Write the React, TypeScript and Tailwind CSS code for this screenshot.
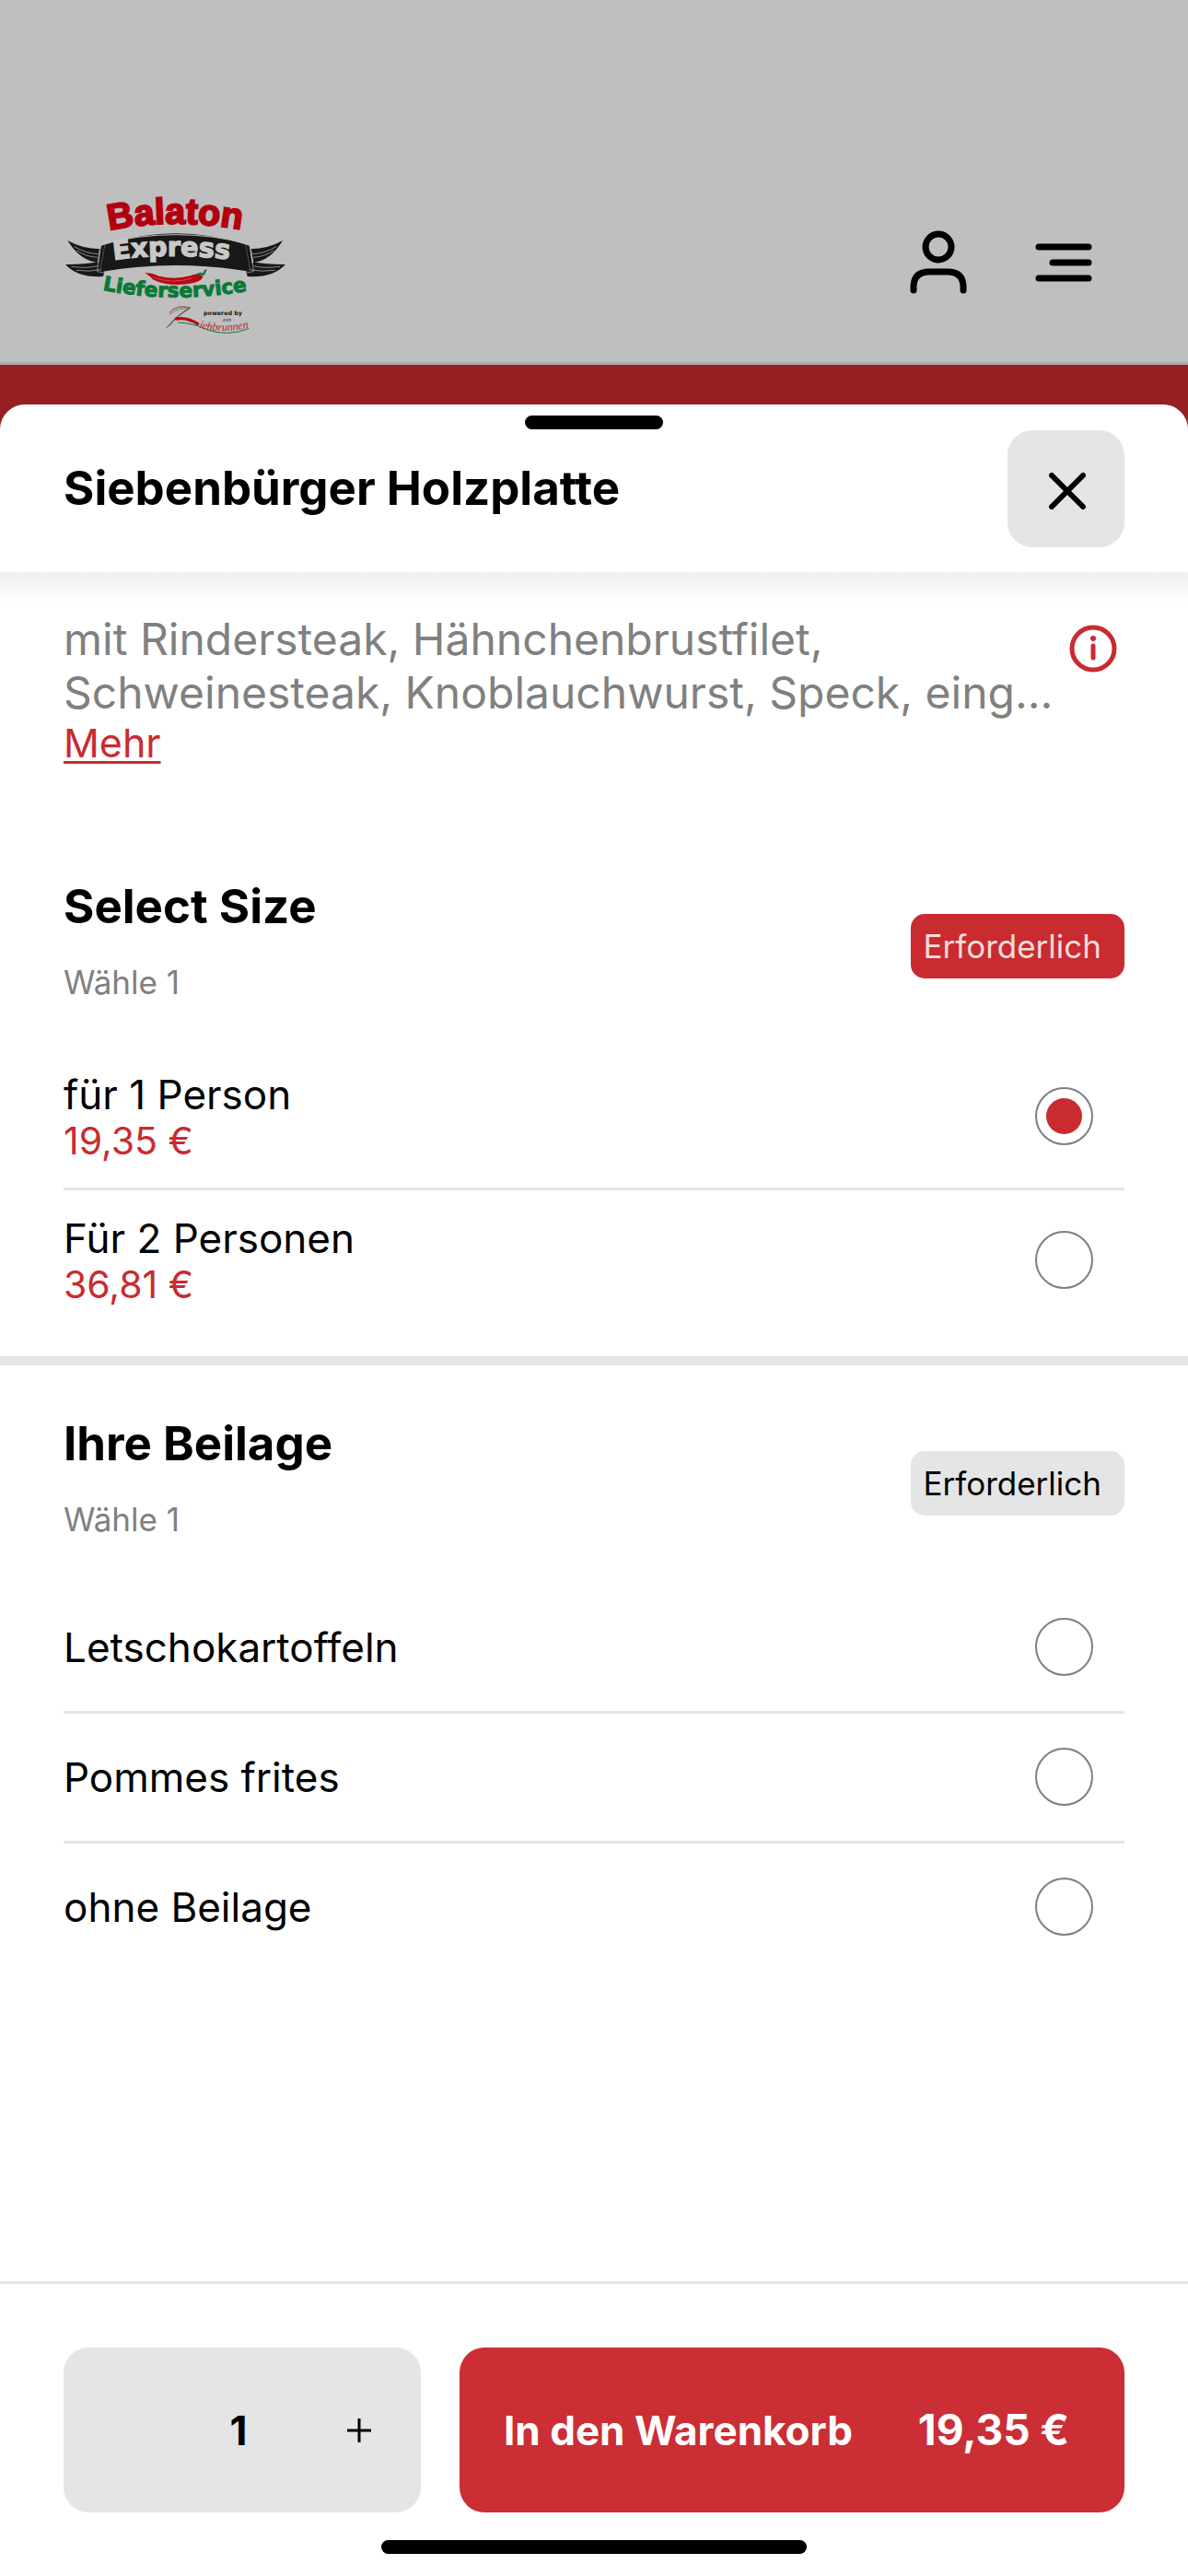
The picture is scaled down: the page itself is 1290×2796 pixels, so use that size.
import { useState } from "react";

type Option = { id: string; label: string; price?: string };

const sizes: Option[] = [
  { id: "one", label: "für 1 Person", price: "19,35 €" },
  { id: "two", label: "Für 2 Personen", price: "36,81 €" },
];

const sides: Option[] = [
  { id: "letscho", label: "Letschokartoffeln" },
  { id: "pommes", label: "Pommes frites" },
  { id: "none", label: "ohne Beilage" },
];

function Logo() {
  return (
    <svg viewBox="0 0 840 630" className="h-[210px] w-[280px]" role="img" aria-label="Balaton Express Lieferservice">
      <defs>
        <path id="arcTop" d="M206 240 Q425 194 670 244" />
        <path id="arcMid" d="M220 336 Q425 308 660 342" />
        <path id="arcLow" d="M184 434 Q425 482 672 434" />
        <path id="arcBrunnen" d="M498 556 Q570 580 680 552" />
      </defs>
      <text fill="#b3000f" stroke="#b3000f" strokeWidth="6" fontSize="118" fontWeight="700" fontFamily="'Liberation Sans', sans-serif">
        <textPath href="#arcTop">Balaton</textPath>
      </text>
      <g fill="#181818">
        <path d="M70 273 Q118 300 176 301 L168 345 Q110 338 70 273Z" />
        <path d="M63 351 Q120 352 168 343 L190 376 L186 390 Q105 396 63 351Z" />
        <path d="M771 273 Q724 300 667 301 L676 345 Q732 338 771 273Z" />
        <path d="M780 351 Q724 352 676 343 L652 376 L656 390 Q738 396 780 351Z" />
        <path d="M180 290 Q425 210 662 290 L676 377 Q425 331 166 377Z" />
      </g>
      <g fill="none" stroke="#bfbfbf" strokeWidth="3">
        <path d="M184 284 Q425 224 658 284" />
        <path d="M192 286 L176 368 M650 286 L665 368" strokeWidth="1" />
        <path d="M92 293 Q130 316 170 317 M100 306 Q130 326 168 328 M750 293 Q712 316 672 317 M742 306 Q712 326 674 328" strokeWidth="2" />
        <path d="M82 358 Q130 365 168 356 M98 370 Q140 376 180 368 M762 358 Q712 365 676 356 M746 370 Q702 376 662 368" strokeWidth="2" />
        <path d="M174 303 L167 374 L189 378 M668 303 L676 374 L653 378" strokeWidth="2" />
      </g>
      <g fontFamily="'DejaVu Sans', sans-serif" fontWeight="700">
        <text fill="#c8c8c8" stroke="#c8c8c8" strokeWidth="4" fontSize="86">
          <textPath href="#arcMid">Express</textPath>
        </text>
        <text fill="#087a38" stroke="#087a38" strokeWidth="3" fontSize="65">
          <textPath href="#arcLow">Lieferservice</textPath>
        </text>
        <text x="513" y="517" fill="#181818" fontSize="19">powered by</text>
      </g>
      <path d="M322 379 Q342 377 368 389 Q420 402 470 388 Q494 376 511 390 Q510 403 482 411 Q405 426 350 401 Q337 388 322 379Z" fill="#b80714" />
      <path d="M350 393 Q410 416 475 396" fill="none" stroke="#d6434b" strokeWidth="3" />
      <path d="M487 385 Q500 373 510 380 Q518 365 524 367 Q519 382 513 388 Q500 383 487 385Z" fill="#087a38" />
      <g fill="none" strokeLinecap="round">
        <path d="M402 508 Q426 480 470 492 Q430 512 392 558" stroke="#b3252d" strokeWidth="3" />
        <path d="M404 514 Q432 488 466 496 Q424 520 402 552" stroke="#087a38" strokeWidth="2" />
        <path d="M424 528 Q458 522 494 544" stroke="#b80714" strokeWidth="10" />
        <path d="M430 540 Q480 542 520 562 Q590 588 660 560" stroke="#087a38" strokeWidth="3" />
      </g>
      <g fontFamily="'Liberation Serif', serif" fontStyle="italic">
        <text fill="#b3252d" fontSize="36">
          <textPath href="#arcBrunnen">iehbrunnen</textPath>
        </text>
        <text x="576" y="536" fill="#333333" fontSize="17">zum</text>
      </g>
    </svg>
  );
}

function Choice({ option, name, checked, onSelect }: { option: Option; name: string; checked: boolean; onSelect: () => void }) {
  return (
    <label className="flex min-h-[63px] cursor-pointer items-center justify-between pr-[34px]">
      <span className="flex flex-col">
        <span className="text-[44px] leading-[54px]">{option.label}</span>
        {option.price && <span className="text-[41px] leading-[46px] text-[#c92b30]">{option.price}</span>}
      </span>
      <span className="grid size-[63px] shrink-0 place-items-center">
        <input
          type="radio"
          name={name}
          checked={checked}
          onChange={onSelect}
          className="peer col-start-1 row-start-1 size-[63px] appearance-none rounded-full border-2 border-[#7f7f7f]"
        />
        <span className="pointer-events-none col-start-1 row-start-1 hidden size-[39px] rounded-full bg-[#c92b30] peer-checked:block" />
      </span>
    </label>
  );
}

function GroupHead({ title, active }: { title: string; active?: boolean }) {
  return (
    <div className="flex items-center justify-between">
      <div className="pb-[12px]">
        <h2 className="text-[51px] leading-[60px] font-bold">{title}</h2>
        <p className="mt-[30px] text-[35px] leading-[44px] text-[#808080]">Wähle 1</p>
      </div>
      <span
        className={
          active
            ? "rounded-[15px] bg-[#c92b30] py-[13px] pr-[25px] pl-[14px] text-[35px] leading-[44px] text-[#f4dcdd]"
            : "rounded-[15px] bg-[#e5e5e5] py-[13px] pr-[25px] pl-[14px] text-[35px] leading-[44px] text-black"
        }
      >
        Erforderlich
      </span>
    </div>
  );
}

export default function App() {
  const [size, setSize] = useState("one");
  const [side, setSide] = useState("");
  const [count, setCount] = useState(1);

  return (
    <div className="flex min-h-screen flex-col bg-[#951f23] font-['Inter','Liberation_Sans',sans-serif] text-black">
      <header className="flex items-start justify-between border-b-[3px] border-[#a9a9a9] bg-[#bfbfbf] pt-[170px] pr-[104px] pb-[13px] pl-[50px]">
        <Logo />
        <div className="mt-[79px] flex gap-[74px]">
          <button aria-label="Konto">
            <svg viewBox="0 0 62 72" className="h-[72px] w-[62px]" fill="none" stroke="black" strokeWidth="7" strokeLinecap="round">
              <circle cx="31" cy="19" r="14" />
              <path d="M4 66 V61 Q5 46 21 46 H41 Q57 46 58 61 V66" />
            </svg>
          </button>
          <button aria-label="Menü">
            <svg viewBox="0 0 62 72" className="h-[72px] w-[62px]" fill="none" stroke="black" strokeWidth="7" strokeLinecap="round">
              <path d="M4 19 H58 M19 36 H58 M4 53 H58" />
            </svg>
          </button>
        </div>
      </header>

      <main className="mt-[43px] flex flex-1 flex-col rounded-t-[27px] bg-white">
        <div className="px-[69px] pt-[12px] pb-[27px]">
          <div className="mx-auto h-[15px] w-[150px] rounded-full bg-black" />
          <div className="mt-px flex items-center justify-between">
            <h1 className="pb-[2px] text-[51px] leading-[60px] font-bold">Siebenbürger Holzplatte</h1>
            <button aria-label="Schließen" className="grid size-[127px] place-items-center rounded-[27px] bg-[#e5e5e5] pt-[4px] pl-[3px]">
              <svg viewBox="0 0 40 40" className="size-[40px]" stroke="black" strokeWidth="6" strokeLinecap="round">
                <path d="M3 3 L37 37 M37 3 L3 37" />
              </svg>
            </button>
          </div>
        </div>
        <div className="h-[36px] bg-linear-to-b from-[#f0f0f0] to-white" />

        <section className="flex items-start justify-between px-[69px] pt-[8px]">
          <div className="min-w-0">
            <p className="text-[48px] leading-[58px] whitespace-nowrap text-[#808080]">
              mit Rindersteak, Hähnchenbrustfilet,
              <br />
              Schweinesteak, Knoblauchwurst, Speck, eing...
            </p>
            <a href="#mehr" className="block w-fit text-[43px] leading-[50px] text-[#c92b30] underline decoration-[3px] underline-offset-[4px]">
              Mehr
            </a>
          </div>
          <button aria-label="Information" className="mt-[13px] mr-[8px] shrink-0">
            <svg viewBox="0 0 52 52" className="size-[52px]" fill="none" stroke="#c92b30" strokeWidth="5" strokeLinecap="round">
              <circle cx="26" cy="26" r="23" />
              <path d="M26 23 V36" />
              <circle cx="26" cy="15" r="3" fill="#c92b30" stroke="none" />
            </svg>
          </button>
        </section>

        <section className="px-[69px] pt-[123px] pb-[55px]">
          <GroupHead title="Select Size" active />
          <div className="mt-[61px] flex flex-col">
            {sizes.map((o, i) => (
              <div key={o.id} className={i > 0 ? "mt-[28px] border-t-[3px] border-[#e5e5e5] pt-[25px]" : ""}>
                <Choice option={o} name="size" checked={size === o.id} onSelect={() => setSize(o.id)} />
              </div>
            ))}
          </div>
        </section>

        <section className="border-t-[10px] border-[#e5e5e5] px-[69px] pt-[55px]">
          <GroupHead title="Ihre Beilage" />
          <div className="mt-[73px] flex flex-col">
            {sides.map((o, i) => (
              <div key={o.id} className={i > 0 ? "mt-[38px] border-t-[3px] border-[#e5e5e5] pt-[37px]" : ""}>
                <Choice option={o} name="side" checked={side === o.id} onSelect={() => setSide(o.id)} />
              </div>
            ))}
          </div>
        </section>

        <footer className="mt-auto border-t-[3px] border-[#e5e5e5] px-[69px] pt-[69px] pb-[24px]">
          <div className="flex gap-[42px]">
            <div className="grid h-[179px] w-[388px] grid-cols-3 items-center rounded-[27px] bg-[#e5e5e5] text-[44px]">
              <button aria-label="Weniger" className="h-full" disabled={count === 1} onClick={() => setCount(count - 1)} />
              <span className="pr-[8px] text-center font-bold">{count}</span>
              <button aria-label="Mehr" className="grid h-full place-items-center pr-[4px]" onClick={() => setCount(count + 1)}>
                <svg viewBox="0 0 26 26" className="size-[26px]" stroke="black" strokeWidth="3">
                  <path d="M0 13 H26 M13 0 V26" />
                </svg>
              </button>
            </div>
            <button className="flex flex-1 items-center justify-between rounded-[27px] bg-[#cb2e35] pr-[60px] pl-[48px] font-bold text-white">
              <span className="text-[44px]">In den Warenkorb</span>
              <span className="text-[46px]">19,35 €</span>
            </button>
          </div>
          <div className="mx-auto mt-[30px] h-[15px] w-[462px] rounded-full bg-black" />
        </footer>
      </main>
    </div>
  );
}
